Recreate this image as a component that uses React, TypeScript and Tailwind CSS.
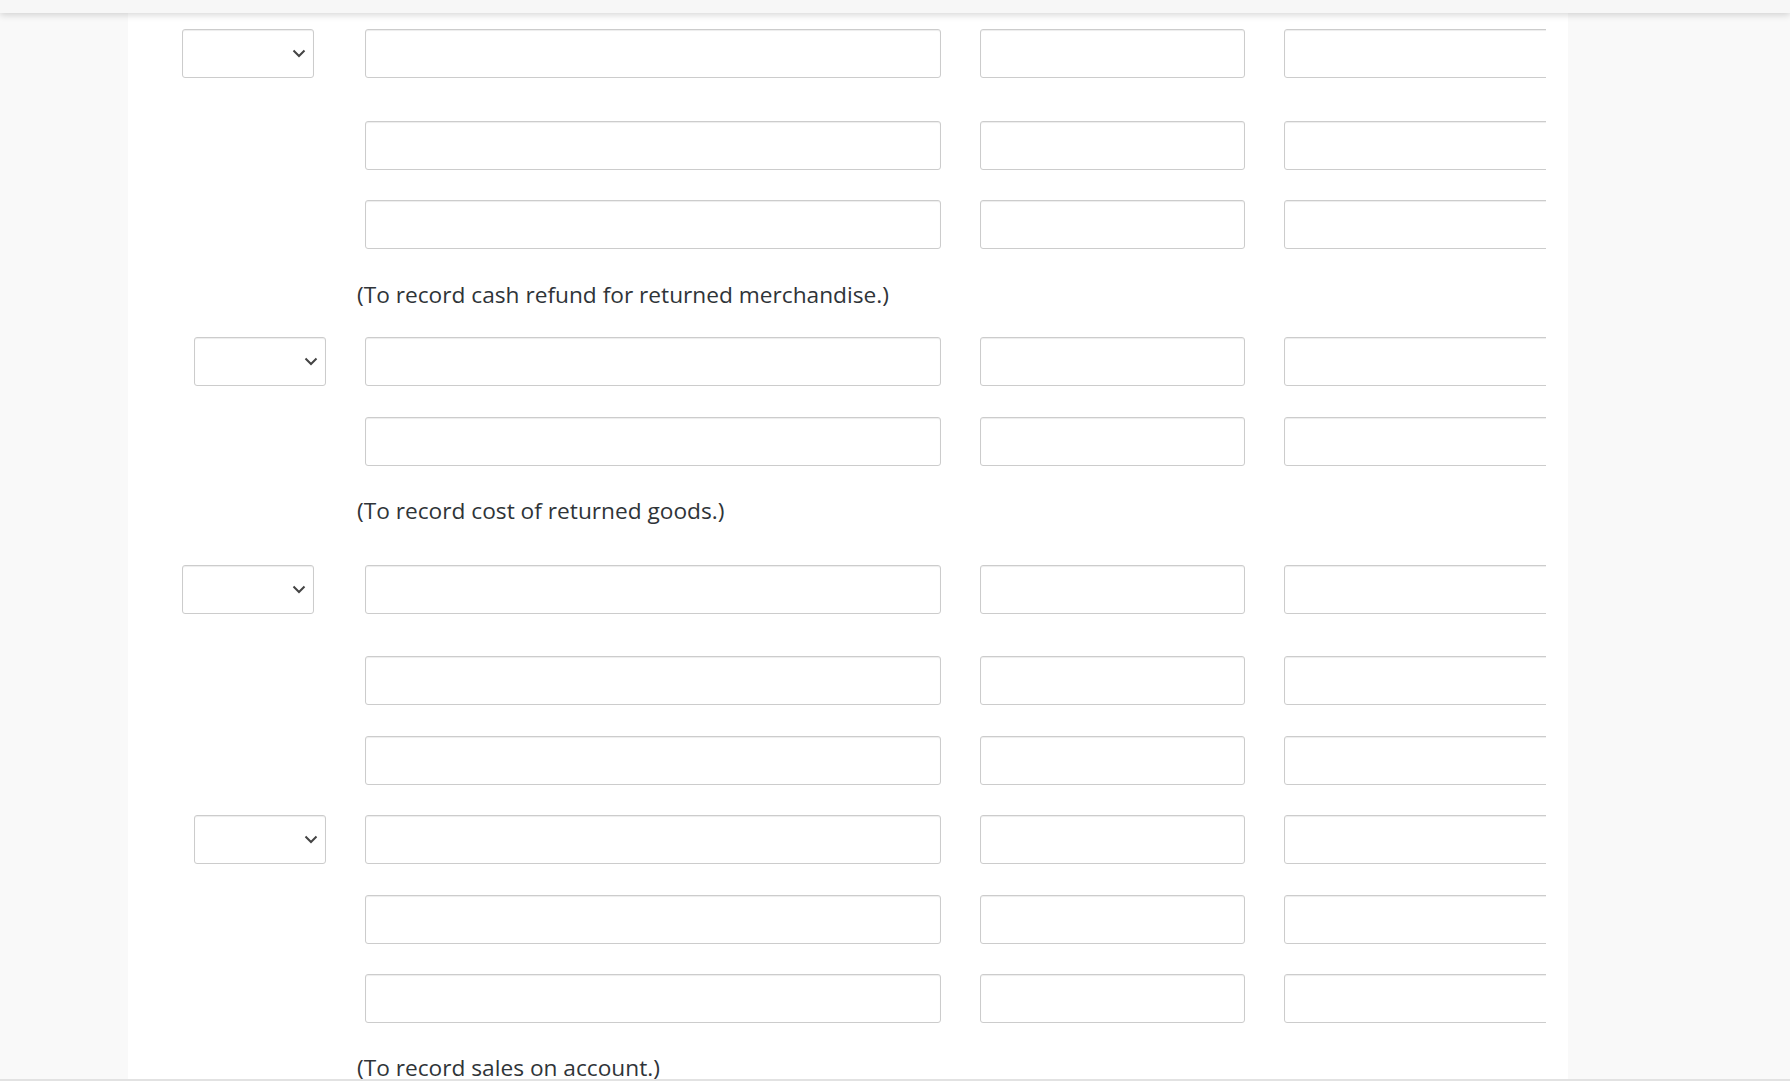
import React from "react";

type Row =
  | { kind: "input"; mt: string; select?: "a" | "b" }
  | { kind: "note"; mt: string; text: string };

const rows: Row[] = [
  { kind: "input", mt: "mt-0", select: "a" },
  { kind: "input", mt: "mt-[43px]" },
  { kind: "input", mt: "mt-[30px]" },
  { kind: "note", mt: "mt-[26px]", text: "(To record cash refund for returned merchandise.)" },
  { kind: "input", mt: "mt-[22px]", select: "b" },
  { kind: "input", mt: "mt-[31px]" },
  { kind: "note", mt: "mt-[25px]", text: "(To record cost of returned goods.)" },
  { kind: "input", mt: "mt-[34px]", select: "a" },
  { kind: "input", mt: "mt-[42px]" },
  { kind: "input", mt: "mt-[31px]" },
  { kind: "input", mt: "mt-[30px]", select: "b" },
  { kind: "input", mt: "mt-[31px]" },
  { kind: "input", mt: "mt-[30px]" },
  { kind: "note", mt: "mt-[25px]", text: "(To record sales on account.)" },
];

const field =
  "h-[49px] bg-white border border-[#cccccc] rounded-[3px] shadow-[inset_0_1px_1px_rgba(0,0,0,0.075)]";

const Chevron = () => (
  <svg width="14" height="9" viewBox="0 0 14 9" fill="none">
    <path d="M1.5 1.5 L7 7 L12.5 1.5" stroke="#444" strokeWidth="2" />
  </svg>
);

const DateSelect = ({ indent }: { indent: boolean }) => (
  <div
    className={`${field} w-[132px] flex items-center justify-end pr-[7px] ${
      indent ? "ml-[12px]" : ""
    }`}
  >
    <Chevron />
  </div>
);

const EntryRow = ({ select }: { select?: "a" | "b" }) => (
  <div className="flex items-center">
    <div className="w-[183px] shrink-0">
      {select && <DateSelect indent={select === "b"} />}
    </div>
    <div className={`${field} w-[576px] shrink-0`} />
    <div className={`${field} w-[265px] shrink-0 ml-[39px]`} />
    <div className="w-[262px] shrink-0 ml-[39px] overflow-hidden">
      <div className={`${field} w-[300px]`} />
    </div>
  </div>
);

export default function App() {
  return (
    <div className="h-[1081px] w-full overflow-hidden bg-[#f9f9f9] flex flex-col font-['Open_Sans',sans-serif]">
      <div className="h-[13px] shrink-0 bg-[#f7f7f7] relative z-10 shadow-[0_2px_7px_rgba(0,0,0,0.16)]" />
      <div className="flex-1 min-h-0 flex">
        <div className="w-[128px] shrink-0" />
        <div className="w-[1440px] shrink-0 bg-white overflow-hidden pt-[16px] pl-[54px]">
          {rows.map((r, i) =>
            r.kind === "input" ? (
              <div key={i} className={r.mt}>
                <EntryRow select={r.select} />
              </div>
            ) : (
              <p
                key={i}
                className={`${r.mt} ml-[175px] h-[40px] leading-[40px] text-[22.7px] text-[#2f3438] whitespace-nowrap`}
              >
                {r.text}
              </p>
            )
          )}
        </div>
      </div>
      <div className="h-[2px] shrink-0 bg-[#e2e2e2]" />
    </div>
  );
}
